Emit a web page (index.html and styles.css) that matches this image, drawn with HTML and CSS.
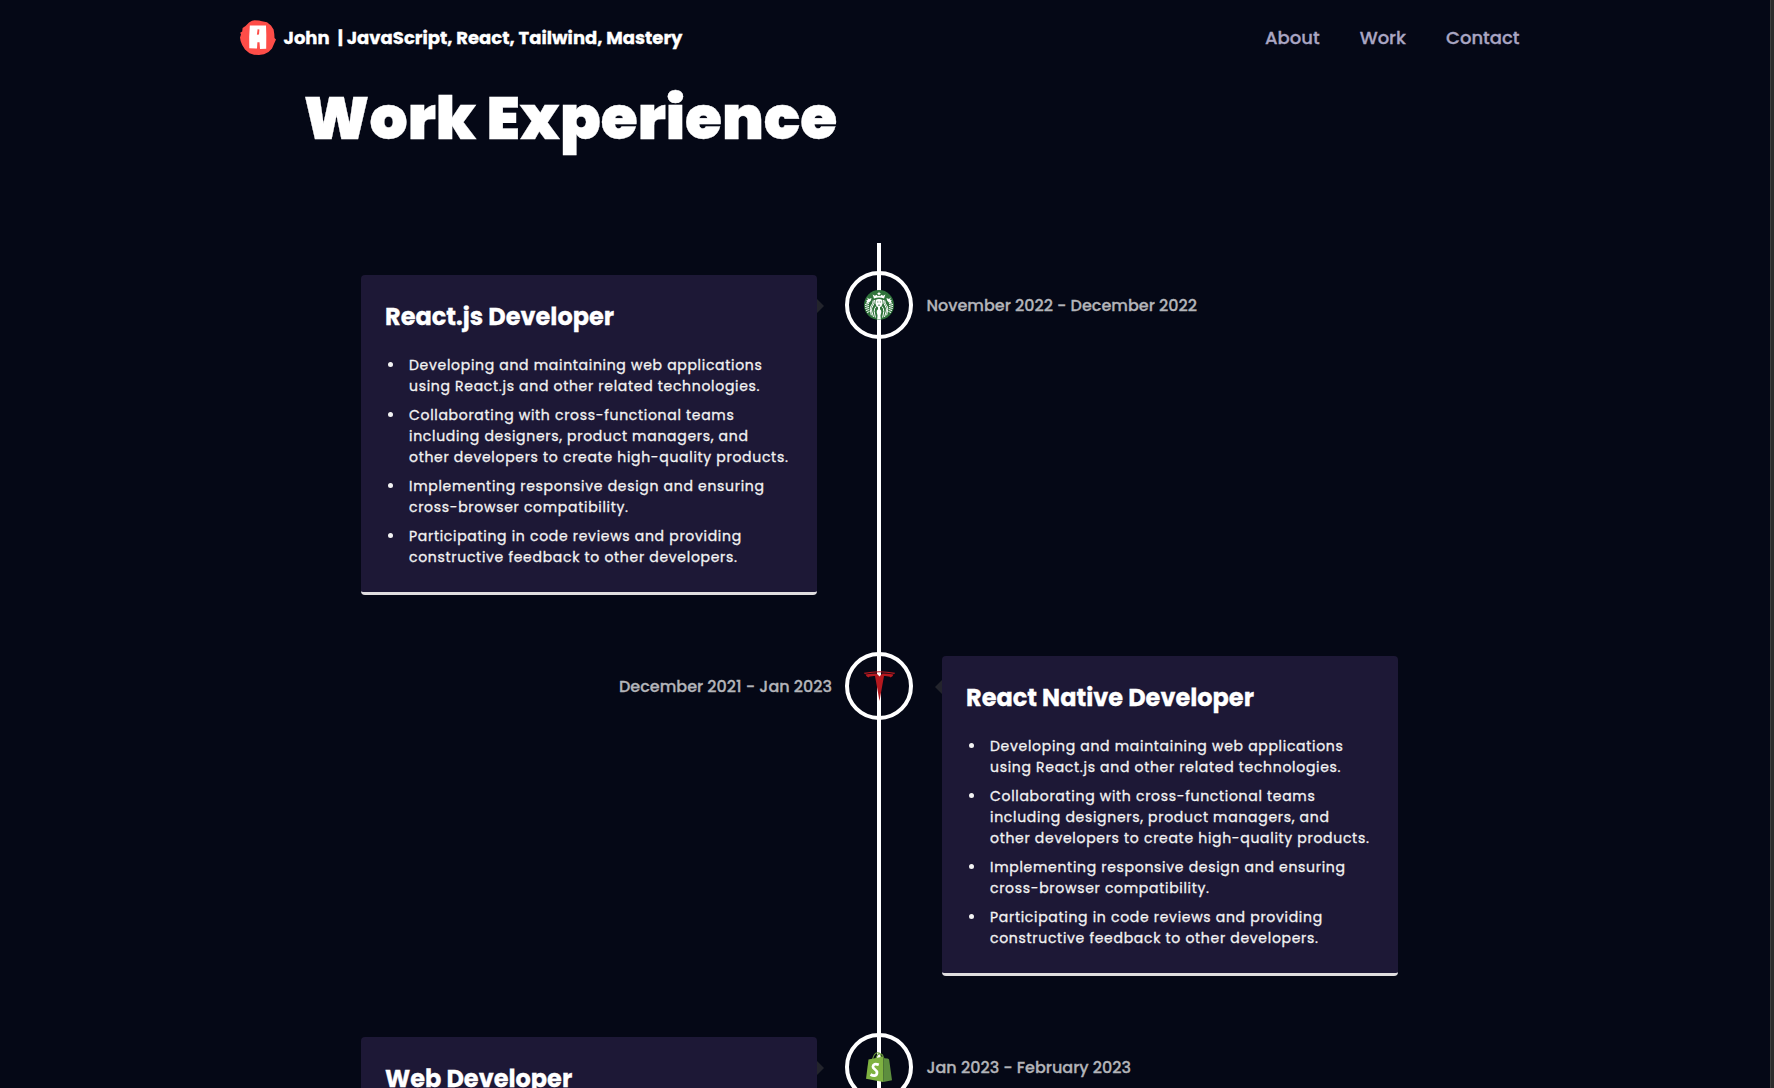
FILE: index.html
```html
<!DOCTYPE html>
<html lang="en">
<head>
<meta charset="utf-8">
<title>Work Experience</title>
<link rel="stylesheet" href="styles.css">
</head>
<body>
<div class="page">
  <div class="content">
    <header class="navbar">
      <div class="brand">
        <svg class="brand-logo" viewBox="0 0 36 36">
          <path fill="#fe4d48" d="M9 2.6 12 .8 14.5.2 19 .6 22 1.2 27 2.2 31 5.500 33.600 9.500 34.300 14 34.500 18 36 19.500 34.200 23.500 32 28.500 28.500 32 24 34.300 19 35 14 34.800 9.500 33.200 5 29.600 2.200 25 .6 21 0 17.500 1 14.500.2 12.800 2.200 11.500 2.600 8 5.500 6z"/>
          <path fill="#fff" fill-rule="evenodd" d="M9.800 5.600 26 5.400 26.300 15 26.200 28.800 20 29 19.500 22.200 17.400 22.200 17 28.500 9.300 28.200 9.200 17zM17.600 9.200 16.900 14.800 19 14.600 19.400 9.400z"/>
        </svg>
        <p class="brand-name"><span>John</span><span>| JavaScript, React, Tailwind, Mastery</span></p>
      </div>
      <nav class="nav-links"><a>About</a><a>Work</a><a>Contact</a></nav>
    </header>
    <main>
      <h1 class="title">Work Experience</h1>
      <div class="timeline">
        <article class="entry">
          <section class="card">
            <h2>React.js Developer</h2>
            <ul>
              <li>Developing and maintaining web applications using React.js and other related technologies.</li>
              <li>Collaborating with cross-functional teams including designers, product managers, and other developers to create high-quality products.</li>
              <li>Implementing responsive design and ensuring cross-browser compatibility.</li>
              <li>Participating in code reviews and providing constructive feedback to other developers.</li>
            </ul>
          </section>
          <div class="badge">
            <svg width="30" height="30" viewBox="0 0 30 30">
              <circle cx="15" cy="15" r="15" fill="#2f733b"/>
              <g fill="#fff">
                <path d="M15 1.600l.6 1.400 1.500.1-1.200.9.5 1.300-1.400-.8-1.400.8.5-1.300-1.200-.9 1.500-.1z"/>
                <path d="M8.600 4.600l2.300 1.200 1.600-1 1.300 1.500 1.200-.9 1.200.9 1.300-1.500 1.600 1 2.300-1.200-1.400 3.800q-5-1.600-10 0z"/>
                <path d="M3.300 7.600 5 9l2.500-.9-.6 2.300-1.700 2.200-3.200.6 1-1.600-.8-1.300 1.700-.2zM26.700 7.600 25 9l-2.500-.9.6 2.300 1.700 2.200 3.200.6-1-1.600.8-1.300-1.700-.2z"/>
                <path d="M11.700 10q3.300-1.800 6.600 0l.3 3.600q-.6 2.800-2.600 3.700v2q1.500.8 1.300 3l-.8 3.200.4 4h-3.800l.4-4-.8-3.200q-.2-2.200 1.300-3v-2q-2-.9-2.600-3.700z"/>
              </g>
              <g fill="none" stroke="#fff" stroke-width="1">
                <path d="M10.500 10q-.2 4-1.800 6t-1 5l1.800 6M9.200 10.500q0 3-1.600 4.700t-1.300 4.600l1 5.500M12 16.500q-2 2-1.800 5l1.200 6M19.500 10q.2 4 1.800 6t1 5l-1.800 6M20.800 10.500q0 3 1.600 4.700t1.300 4.600l-1 5.500M18 16.500q2 2 1.800 5l-1.200 6"/>
                <path d="M1 14.500l4-1M1 16.500l4-1M1.300 18.500l3.700-1M2 20.500l3.200-1M3 22.500l2.500-1M29 14.500l-4-1M29 16.500l-4-1M28.700 18.500l-3.700-1M28 20.500l-3.200-1M27 22.500l-2.500-1"/>
              </g>
              <path d="M13.200 12h1.200M15.800 12h1.200M14 15.200h2" stroke="#2f733b" stroke-width=".8"/>
            </svg>
          </div>
          <p class="date">November 2022 - December 2022</p>
        </article>
        <article class="entry entry-right">
          <p class="date">December 2021 - Jan 2023</p>
          <div class="badge">
            <svg width="31" height="30" viewBox="0 0 31 30" fill="#b5191f">
              <path d="M0 1.800Q15.500-1.500 31 1.800L30.400 3Q15.500-.3.600 3z"/>
              <path d="M1.500 3.600Q8 2.300 12.700 2.600L15.500 5.500 18.300 2.600Q23 2.300 29.500 3.600 28.800 5.800 26.500 6.500 25.500 4.800 20 5L15.500 30 11 5Q5.500 4.800 4.500 6.500 2.200 5.800 1.500 3.600z"/>
            </svg>
          </div>
          <section class="card">
            <h2>React Native Developer</h2>
            <ul>
              <li>Developing and maintaining web applications using React.js and other related technologies.</li>
              <li>Collaborating with cross-functional teams including designers, product managers, and other developers to create high-quality products.</li>
              <li>Implementing responsive design and ensuring cross-browser compatibility.</li>
              <li>Participating in code reviews and providing constructive feedback to other developers.</li>
            </ul>
          </section>
        </article>
        <article class="entry">
          <section class="card">
            <h2>Web Developer</h2>
          </section>
          <div class="badge">
            <svg width="26" height="30" viewBox="0 0 26 30">
              <path fill="none" stroke="#6d9f3d" stroke-width="1.100" d="M6.500 7.500Q8 1.200 11.500.8t3.800 5.700M10 6.500Q11.500 1.500 14.300 1.800t2.700 3.700"/>
              <path fill="#7fb241" d="M2.500 7.500 17.500 4.500 17.200 30 0 26.800z"/>
              <path fill="#5d8e3e" d="M17.500 4.500 18.500 6.200 21.500 6.500Q23 6.600 23.200 8L26 28.200 17.200 30z"/>
              <path fill="none" stroke="#fff" stroke-width="2.700" d="M12.800 12.800Q7.400 10.800 6.900 14.600C6.700 17.200 11.200 17.400 11 20.800 10.700 24.200 7.500 24.300 4.500 22.500"/>
            </svg>
          </div>
          <p class="date">Jan 2023 - February 2023</p>
        </article>
      </div>
    </main>
  </div>
  <div class="scrollbar"></div>
</div>
</body>
</html>
```
FILE: styles.css
```css
* { box-sizing: border-box; margin: 0; padding: 0; }

body {
  background: #050816;
  color: #fff;
  font-family: Poppins, Inter, "Liberation Sans", sans-serif;
  -webkit-text-stroke: 0.3px currentColor;
}

.page {
  display: flex;
  justify-content: space-between;
  height: 1088px;
  overflow: hidden;
}

.content { width: 1759px; }

.scrollbar {
  width: 4px;
  background: #2c2c2c;
  border-left: 1px solid #404040;
}

.navbar {
  display: flex;
  align-items: center;
  justify-content: space-between;
  width: 1280px;
  height: 76px;
  margin: 0 auto;
}

.brand { display: flex; align-items: center; gap: 8px; }
.brand-logo { width: 36px; height: 36px; }

.brand-name {
  display: flex;
  gap: 8px;
  font-size: 18px;
  font-weight: 700;
  line-height: 28px;
}

.nav-links {
  display: flex;
  gap: 40px;
  color: #aaa6c3;
  font-size: 18px;
  font-weight: 500;
  line-height: 28px;
}

.title {
  width: 1280px;
  margin: 12px auto 95px;
  padding-left: 64px;
  font-size: 60px;
  font-weight: 900;
  line-height: 60px;
}

.timeline {
  position: relative;
  display: flex;
  flex-direction: column;
  gap: 57px;
  width: 1037px;
  margin: 0 auto;
  padding-top: 28px;
}

/* the vertical rule behind the badges */
.timeline::before {
  content: "";
  position: absolute;
  top: 0;
  left: 516px;
  width: 4px;
  height: 900px;
  background: #fff;
}

.entry {
  display: grid;
  grid-template-columns: 484px 68px 485px;
  align-items: start;
}

.card {
  position: relative;
  width: 456px;
  margin-top: 4px;
  padding: 24px;
  background: #1d1836;
  border-bottom: 3px solid #e0dedf;
  border-radius: 4px;
}

.entry-right .card { justify-self: end; }

.card::after {
  content: "";
  position: absolute;
  top: 24px;
  left: 100%;
  border: 7px solid transparent;
  border-left-color: #23242c;
  border-right-width: 0;
}

.entry-right .card::after {
  left: auto;
  right: 100%;
  border-right: 7px solid #23242c;
  border-left-width: 0;
}

.card h2 {
  font-size: 24px;
  font-weight: 700;
  line-height: 36px;
}

.card ul {
  display: flex;
  flex-direction: column;
  gap: 8px;
  margin: 20px 0 0 20px;
  list-style: disc;
}

.card li {
  padding-left: 4px;
  color: #f3f3f3;
  font-size: 14px;
  letter-spacing: 0.05em;
  line-height: 21px;
}

.badge {
  position: relative;
  display: flex;
  align-items: center;
  justify-content: center;
  width: 68px;
  height: 68px;
  border: 4px solid #fff;
  border-radius: 50%;
}

.date {
  padding: 0 13px 0 13.5px;
  color: #b3b4b9;
  font-size: 16px;
  font-weight: 500;
  line-height: 70px;
}

.entry-right .date { text-align: right; }
```
